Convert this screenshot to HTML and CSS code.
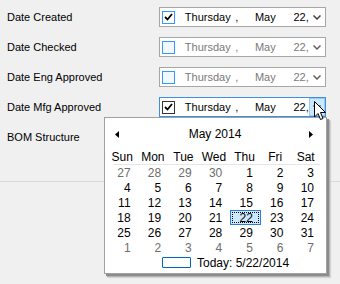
FILE: index.html
```html
<!DOCTYPE html>
<html>
<head>
  <title>Dates</title>
  <link rel="stylesheet" href="styles.css">
</head>
<body>
  <div class="form">
    <div class="row">
      <span class="label">Date Created</span>
      <div class="picker">
        <span class="check hot"><svg width="9" height="8" viewBox="0 0 9 8"><path d="M1 4 L3.5 6.5 L8 1" fill="none" stroke="#000" stroke-width="1.8"/></svg></span>
        <span class="seg day">Thursday</span><span class="seg comma">,</span><span class="seg month">May</span><span class="seg date">22,</span>
        <span class="drop"><svg width="8" height="5" viewBox="0 0 8 5"><path d="M0.5 0.5 L4 4 L7.5 0.5" fill="none" stroke="#404040" stroke-width="1.5"/></svg></span>
      </div>
    </div>
    <div class="row">
      <span class="label">Date Checked</span>
      <div class="picker off">
        <span class="check empty"></span>
        <span class="seg day">Thursday</span><span class="seg comma">,</span><span class="seg month">May</span><span class="seg date">22,</span>
        <span class="drop"><svg width="8" height="5" viewBox="0 0 8 5"><path d="M0.5 0.5 L4 4 L7.5 0.5" fill="none" stroke="#606060" stroke-width="1.5"/></svg></span>
      </div>
    </div>
    <div class="row">
      <span class="label">Date Eng Approved</span>
      <div class="picker off">
        <span class="check empty"></span>
        <span class="seg day">Thursday</span><span class="seg comma">,</span><span class="seg month">May</span><span class="seg date">22,</span>
        <span class="drop"><svg width="8" height="5" viewBox="0 0 8 5"><path d="M0.5 0.5 L4 4 L7.5 0.5" fill="none" stroke="#606060" stroke-width="1.5"/></svg></span>
      </div>
    </div>
    <div class="row">
      <span class="label">Date Mfg Approved</span>
      <div class="picker focus">
        <span class="check"><svg width="9" height="8" viewBox="0 0 9 8"><path d="M1 4 L3.5 6.5 L8 1" fill="none" stroke="#000" stroke-width="1.8"/></svg></span>
        <span class="seg day">Thursday</span><span class="seg comma">,</span><span class="seg month">May</span><span class="seg date">22,</span>
        <span class="drop pressed"><svg width="8" height="5" viewBox="0 0 8 5"><path d="M0.5 0.5 L4 4 L7.5 0.5" fill="none" stroke="#404040" stroke-width="1.5"/></svg></span>
      </div>
    </div>
    <div class="row">
      <span class="label">BOM Structure</span>
    </div>
    <div class="rule"></div>
  </div>

  <div class="calendar">
    <div class="cal-head">
      <svg width="4" height="7" viewBox="0 0 4 7"><path d="M4 0 L0 3.5 L4 7 Z" fill="#000"/></svg>
      <span class="cal-title">May 2014</span>
      <svg width="4" height="7" viewBox="0 0 4 7"><path d="M0 0 L4 3.5 L0 7 Z" fill="#000"/></svg>
    </div>
    <div class="dow">
      <span>Sun</span><span>Mon</span><span>Tue</span><span>Wed</span><span>Thu</span><span>Fri</span><span>Sat</span>
    </div>
    <div class="dow-line"></div>
    <div class="days">
      <span class="other">27</span><span class="other">28</span><span class="other">29</span><span class="other">30</span><span>1</span><span>2</span><span>3</span>
      <span>4</span><span>5</span><span>6</span><span>7</span><span>8</span><span>9</span><span>10</span>
      <span>11</span><span>12</span><span>13</span><span>14</span><span>15</span><span>16</span><span>17</span>
      <span>18</span><span>19</span><span>20</span><span>21</span><span class="sel">22</span><span>23</span><span>24</span>
      <span>25</span><span>26</span><span>27</span><span>28</span><span>29</span><span>30</span><span>31</span>
      <span class="other">1</span><span class="other">2</span><span class="other">3</span><span class="other">4</span><span class="other">5</span><span class="other">6</span><span class="other">7</span>
    </div>
    <div class="today">
      <span class="today-box"></span>
      <span>Today: 5/22/2014</span>
    </div>
  </div>

  <svg class="cursor" width="14" height="22" viewBox="0 0 14 22">
    <path d="M1.5 1.5 L1.5 17 L5 13.5 L7.5 19.5 L10 18.5 L7.5 12.5 L12.5 12.5 Z" fill="#fff" stroke="#000" stroke-width="1" stroke-linejoin="miter"/>
  </svg>
</body>
</html>
```

FILE: styles.css
```css
* { box-sizing: border-box; }
body { margin: 0; background: #f0f0f0; font-family: "Liberation Sans", Arial, sans-serif; font-size: 11px; color: #000; width: 340px; height: 284px; overflow: hidden; }

.form { padding-top: 7px; display: flex; flex-direction: column; gap: 10px; }
.row { display: flex; align-items: center; height: 20px; }
.label { width: 159px; padding-left: 7px; }

.picker { width: 167px; height: 20px; border: 1px solid #a6a6a6; background: #fff; display: flex; align-items: center; }
.picker.focus { border-color: #3d8ee0; }
.check { width: 13px; height: 13px; margin-left: 2px; border: 1px solid #333; background: #fff; display: flex; align-items: center; justify-content: center; }
.check.hot { border-color: #3399ff; }
.check.empty { border-color: #3399ff; background: #f2f8ff; }
.seg { display: inline-block; white-space: nowrap; }
.day { margin-left: 10px; width: 51px; }
.comma { width: 20px; }
.month { width: 39px; }
.date { width: 16px; }
.off .seg { color: #7a7a7a; }
.drop { margin-left: auto; width: 16px; height: 18px; display: flex; align-items: center; justify-content: center; }
.drop.pressed { background: #cce8ff; border: 1px solid #99ccf5; }

.rule { margin-top: 24px; height: 1px; background: #d9d9d9; }

.calendar { position: absolute; left: 104px; top: 117px; width: 223px; height: 157px; background: #fff; border: 1px solid #a0a0a0; box-shadow: 2px 2px 0 #8c8c8c, 3px 3px 1px #b4b4b4, 4px 4px 1px #dadada; padding: 0 4px 0 3px; font-size: 12px; }
.cal-head { margin-top: 7px; height: 18px; display: flex; align-items: center; justify-content: space-between; padding: 0 9px 0 7px; }
.cal-title { font-size: 12px; margin-left: 2px; }
.dow { margin-top: 7px; height: 14px; display: grid; grid-template-columns: repeat(7, 1fr); align-items: center; }
.dow span { text-align: center; padding-right: 2px; }
.dow-line { height: 1px; margin: 0 2px 0 5px; background: #e6e6e6; }
.days { display: grid; grid-template-columns: repeat(7, 1fr); grid-auto-rows: 15px; }
.days span { display: flex; align-items: center; justify-content: flex-end; padding-right: 8px; }
.days .other { color: #6d6d6d; }
.days .sel { background: #cce8ff; border: 1px solid #2a7fd4; outline: 1px dotted #000; outline-offset: -3px; padding-right: 7px; }
.today { height: 15px; display: flex; align-items: center; padding-left: 54px; gap: 6px; }
.today-box { width: 29px; height: 11px; border: 1px solid #0067c0; border-radius: 1px; }

.cursor { position: absolute; left: 313px; top: 100px; }
```
